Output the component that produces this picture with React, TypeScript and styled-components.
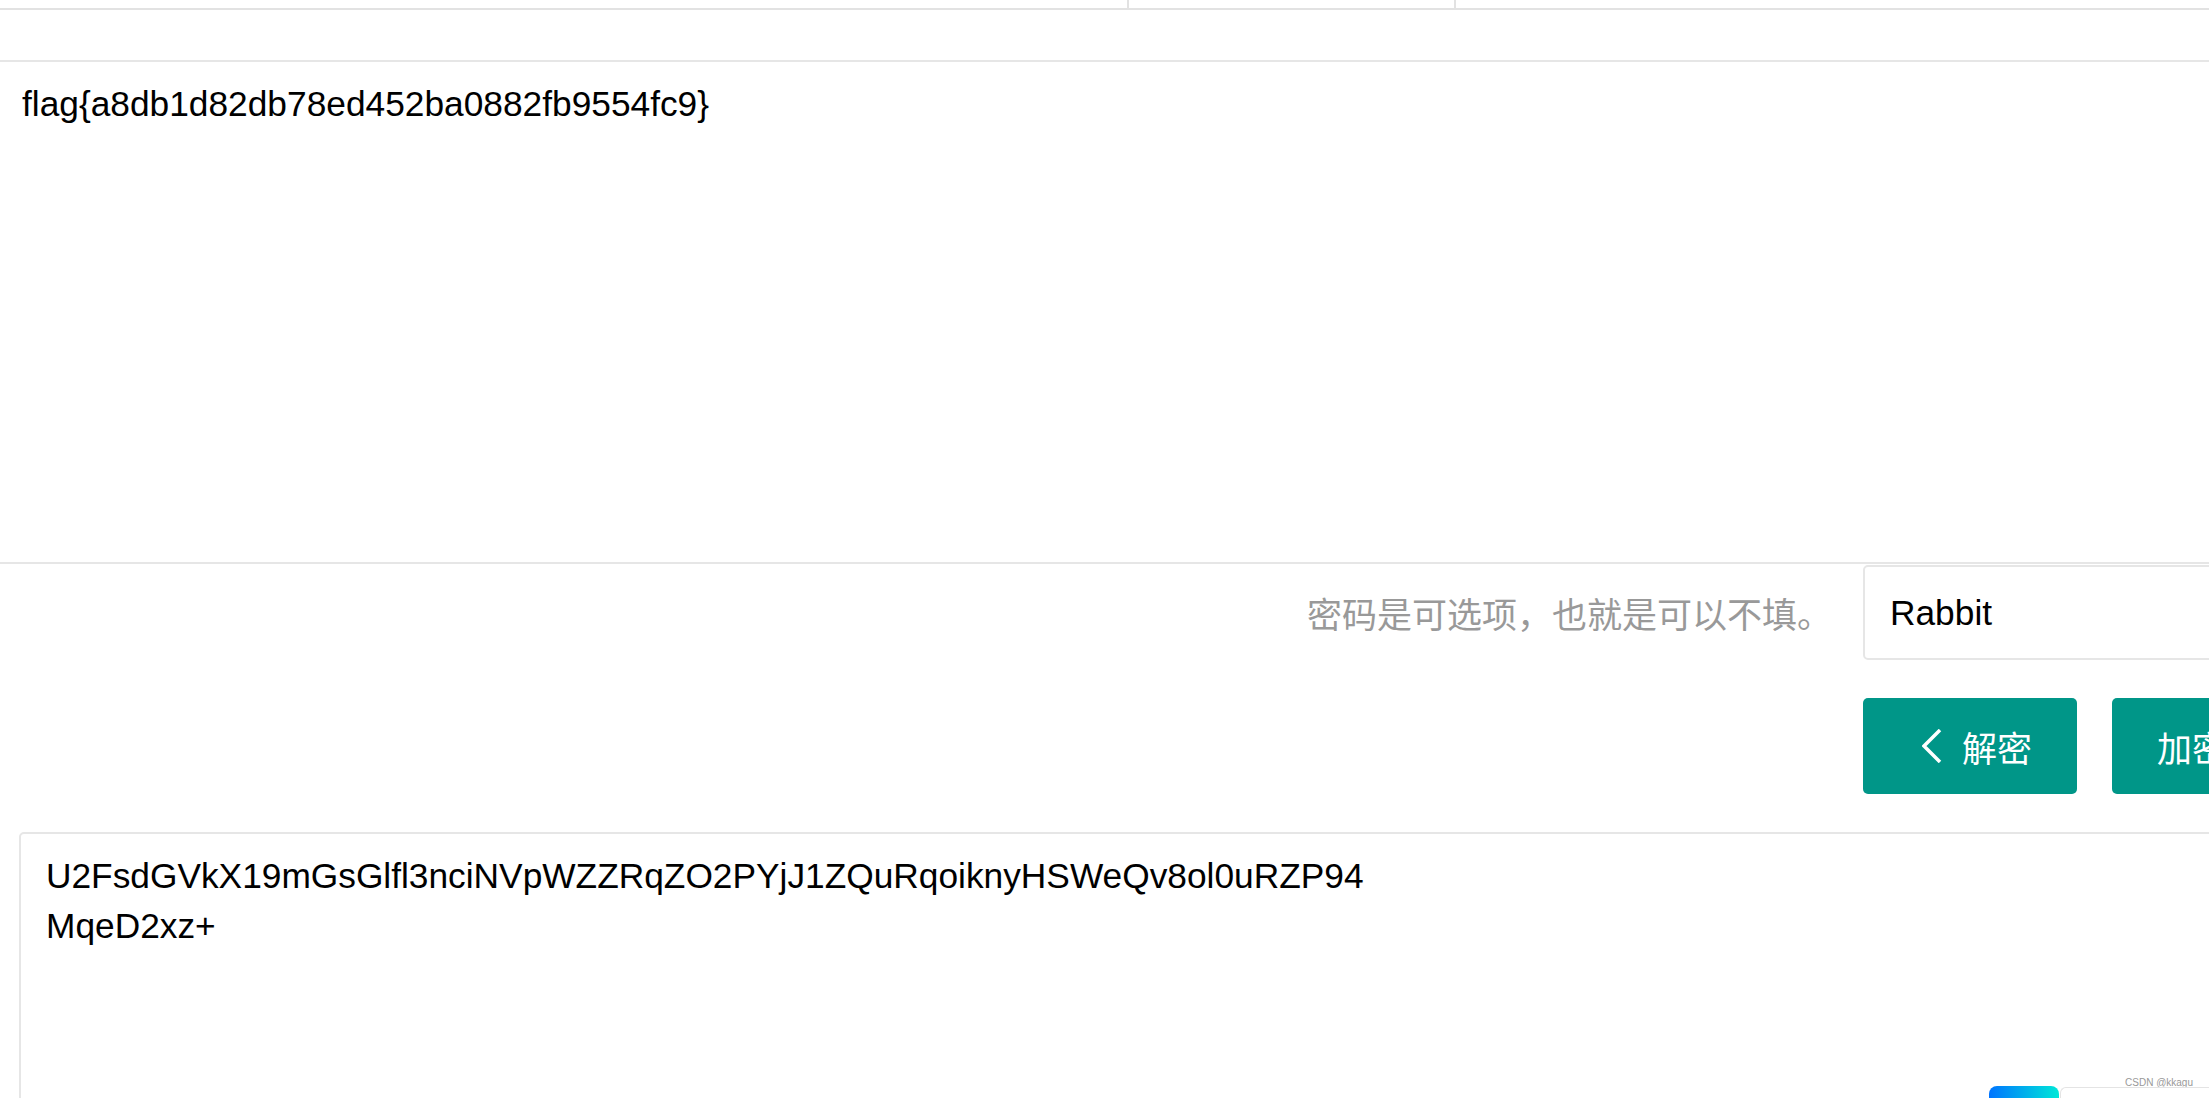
import styled, { createGlobalStyle } from "styled-components";

const GlobalStyle = createGlobalStyle`
  html, body {
    margin: 0;
    padding: 0;
    background: #ffffff;
    overflow: hidden;
  }
  * {
    box-sizing: border-box;
  }
`;

const Page = styled.div`
  position: relative;
  width: 100vw;
  height: 100vh;
  overflow: hidden;
  font-family: "Liberation Sans", Arial, "Noto Sans CJK SC", sans-serif;
  color: #000;
`;

const TableHead = styled.div`
  display: flex;
  height: 10px;
  border-bottom: 2px solid #e2e2e2;
`;

const HeadCell = styled.div<{ $width?: number }>`
  width: ${(p) => (p.$width ? `${p.$width}px` : "auto")};
  flex: ${(p) => (p.$width ? "none" : "1")};
  border-right: ${(p) => (p.$width ? "2px solid #e2e2e2" : "none")};
`;

const Area = styled.textarea<{ $offset: number; $height: number; $round?: boolean }>`
  display: block;
  margin-left: ${(p) => p.$offset}px;
  width: 2500px;
  height: ${(p) => p.$height}px;
  padding: 17px 25px 13px;
  border: 2px solid #e6e6e6;
  border-radius: ${(p) => (p.$round ? "5px" : "0")};
  font-family: "Liberation Sans", Arial, sans-serif;
  font-size: 35.3px;
  line-height: 50px;
  color: #000;
  background: #fff;
  resize: none;
  outline: none;
  overflow: hidden;
`;

const FlagArea = styled(Area)`
  margin-top: 50px;
`;

const CipherArea = styled(Area)`
  margin-top: 38px;
`;

const FormRow = styled.div`
  display: flex;
  align-items: center;
  margin-top: 1px;
`;

const AuxText = styled.div`
  flex: none;
  width: 1863px;
  padding-right: 31px;
  text-align: right;
  font-family: "Noto Sans CJK SC", sans-serif;
  font-size: 35px;
  color: #999;
`;

const PassInput = styled.input`
  flex: none;
  width: 500px;
  height: 95px;
  padding: 0 25px;
  border: 2px solid #e6e6e6;
  border-radius: 5px;
  font-family: "Liberation Sans", Arial, sans-serif;
  font-size: 35.3px;
  color: #000;
  outline: none;
  background: #fff;
`;

const ButtonRow = styled.div`
  display: flex;
  gap: 35px;
  margin-top: 38px;
  padding-left: 1863px;
`;

const Button = styled.button`
  flex: none;
  display: inline-flex;
  align-items: center;
  height: 96px;
  padding: 0 45px;
  border: none;
  border-radius: 5px;
  background: #009688;
  color: #fff;
  font-family: "Noto Sans CJK SC", sans-serif;
  font-size: 35px;
  white-space: nowrap;
  cursor: pointer;
`;

const Chevron = styled.svg<{ $side: "left" | "right" }>`
  width: 20px;
  height: 34px;
  margin-left: ${(p) => (p.$side === "left" ? "14px" : "20px")};
  margin-right: ${(p) => (p.$side === "left" ? "20px" : "14px")};
`;

const Watermark = styled.div`
  position: absolute;
  right: 16px;
  bottom: 10px;
  font-family: "Liberation Sans", Arial, sans-serif;
  font-size: 10px;
  color: #999;
`;

const GradientTab = styled.div`
  position: absolute;
  left: 1989px;
  top: 1086px;
  width: 70px;
  height: 30px;
  border-radius: 8px 8px 0 0;
  background: linear-gradient(90deg, #0074ff, #00e8d8);
`;

const ToolBox = styled.div`
  position: absolute;
  left: 2060px;
  top: 1087px;
  width: 200px;
  height: 30px;
  border-top: 1px solid #e4e4e4;
  border-left: 1px solid #e4e4e4;
  border-radius: 6px 0 0 0;
  background: #fff;
`;

const flag = "flag{a8db1d82db78ed452ba0882fb9554fc9}";
const cipher =
  "U2FsdGVkX19mGsGlfl3nciNVpWZZRqZO2PYjJ1ZQuRqoiknyHSWeQv8ol0uRZP94\nMqeD2xz+";

export default function App() {
  return (
    <Page>
      <GlobalStyle />
      <TableHead>
        <HeadCell $width={1129} />
        <HeadCell $width={327} />
        <HeadCell />
      </TableHead>

      <FlagArea $offset={-5} $height={504} value={flag} readOnly />

      <FormRow>
        <AuxText>密码是可选项，也就是可以不填。</AuxText>
        <PassInput value="Rabbit" readOnly />
      </FormRow>

      <ButtonRow>
        <Button>
          <Chevron $side="left" viewBox="0 0 20 34">
            <polyline
              points="18,1 2,17 18,33"
              fill="none"
              stroke="#fff"
              strokeWidth="3.5"
            />
          </Chevron>
          解密
        </Button>
        <Button>
          加密
          <Chevron $side="right" viewBox="0 0 20 34">
            <polyline
              points="2,1 18,17 2,33"
              fill="none"
              stroke="#fff"
              strokeWidth="3.5"
            />
          </Chevron>
        </Button>
      </ButtonRow>

      <CipherArea $offset={19} $height={400} $round value={cipher} readOnly />

      <Watermark>CSDN @kkagu</Watermark>
      <GradientTab />
      <ToolBox />
    </Page>
  );
}
